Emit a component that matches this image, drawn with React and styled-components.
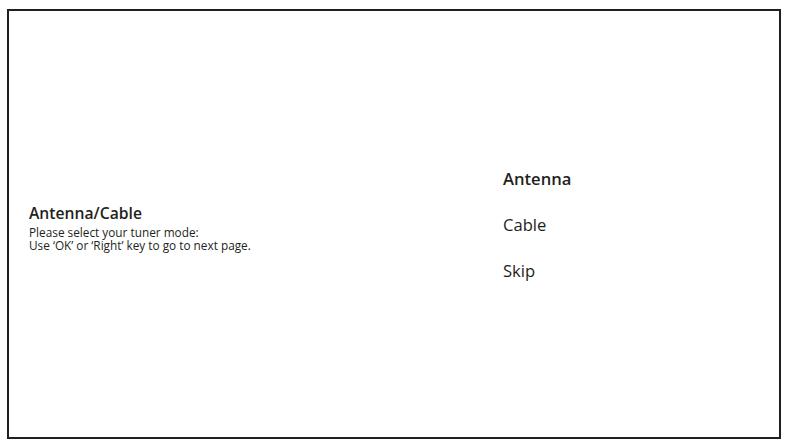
import styled, { createGlobalStyle } from "styled-components"

const Global = createGlobalStyle`
    html, body {
        margin: 0;
        padding: 0;
        background: #ffffff;
    }
    body {
        font-family: "Open Sans", "Noto Sans", sans-serif;
        color: #231f20;
    }
`

const Screen = styled.div`
    box-sizing: border-box;
    width: 786px;
    height: 444px;
    padding: 9px 5px 5px 7px;
`

const Frame = styled.div`
    box-sizing: border-box;
    width: 774px;
    height: 430px;
    border: 2.5px solid #231f20;
    display: grid;
    grid-template-columns: 474px 1fr;
    align-items: center;
    padding-left: 20px;
`

const Intro = styled.div`
    display: flex;
    flex-direction: column;
    margin-top: 7px;
`

const Title = styled.div`
    font-size: 15.7px;
    font-weight: 600;
    line-height: 20px;
    margin-bottom: 2.5px;
`

const Hint = styled.div`
    font-size: 11.8px;
    line-height: 13px;
`

const Options = styled.div`
    display: flex;
    flex-direction: column;
    gap: 23px;
    margin-top: 0;
`

const Option = styled.div`
    font-size: 16.6px;
    line-height: 23px;
    font-weight: ${(p) => (p.$active ? 600 : 400)};
`

const App = () => {
    return (
        <Screen>
            <Global />
            <Frame>
                <Intro>
                    <Title>Antenna/Cable</Title>
                    <Hint>Please select your tuner mode:</Hint>
                    <Hint>Use ‘OK’ or ‘Right’ key to go to next page.</Hint>
                </Intro>
                <Options>
                    <Option $active>Antenna</Option>
                    <Option>Cable</Option>
                    <Option>Skip</Option>
                </Options>
            </Frame>
        </Screen>
    )
}
export default App
